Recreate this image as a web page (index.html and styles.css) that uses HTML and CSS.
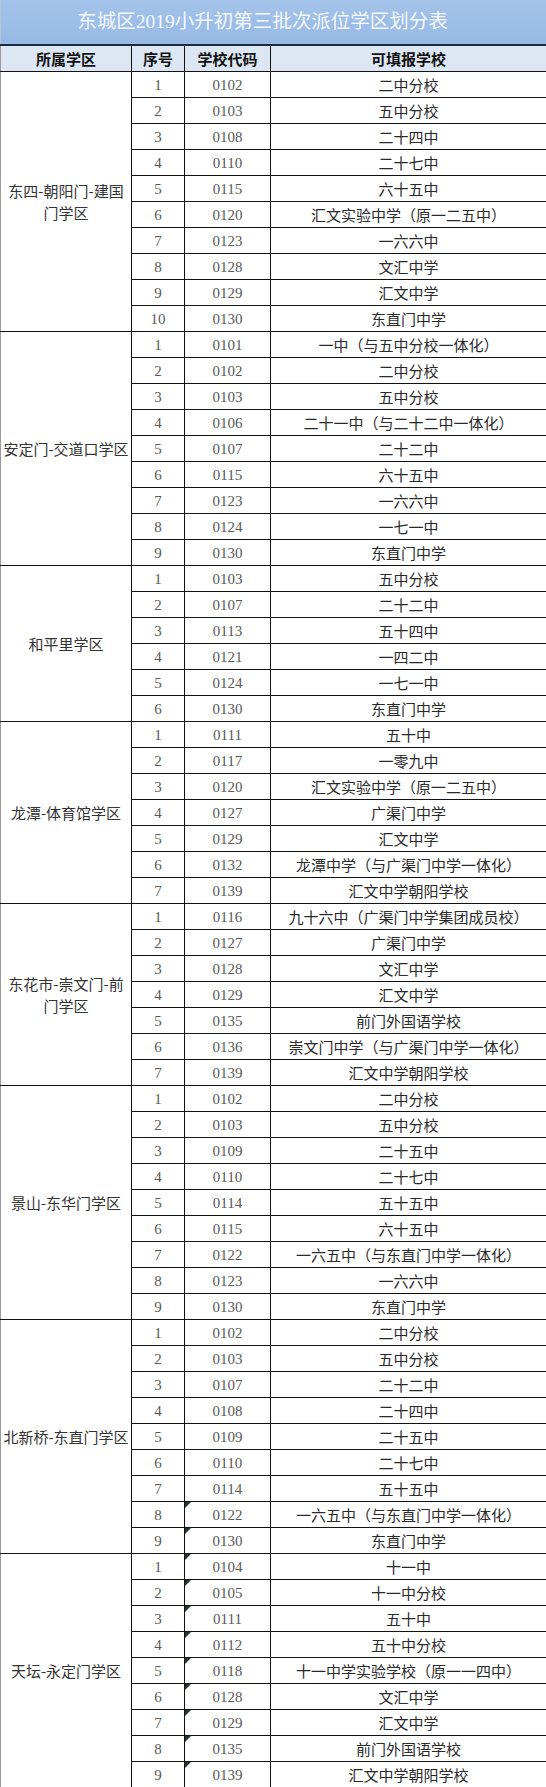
FILE: index.html
```html
<!DOCTYPE html>
<html lang="zh-CN">
<head>
<meta charset="utf-8">
<title>东城区2019小升初第三批次派位学区划分表</title>
<link rel="stylesheet" href="styles.css">
</head>
<body>
<div class="sheet">
  <div class="title">东城区2019小升初第三批次派位学区划分表</div>
  <table class="grid">
    <colgroup>
      <col class="c-area"><col class="c-no"><col class="c-code"><col class="c-school">
    </colgroup>
    <thead>
      <tr><th class="first">所属学区</th><th>序号</th><th>学校代码</th><th>可填报学校</th></tr>
    </thead>
    <tbody>
      <tr><td class="area" rowspan="10">东四-朝阳门-建国<br>门学区</td><td class="num">1</td><td class="num">0102</td><td>二中分校</td></tr>
      <tr><td class="num">2</td><td class="num">0103</td><td>五中分校</td></tr>
      <tr><td class="num">3</td><td class="num">0108</td><td>二十四中</td></tr>
      <tr><td class="num">4</td><td class="num">0110</td><td>二十七中</td></tr>
      <tr><td class="num">5</td><td class="num">0115</td><td>六十五中</td></tr>
      <tr><td class="num">6</td><td class="num">0120</td><td>汇文实验中学（原一二五中）</td></tr>
      <tr><td class="num">7</td><td class="num">0123</td><td>一六六中</td></tr>
      <tr><td class="num">8</td><td class="num">0128</td><td>文汇中学</td></tr>
      <tr><td class="num">9</td><td class="num">0129</td><td>汇文中学</td></tr>
      <tr><td class="num">10</td><td class="num">0130</td><td>东直门中学</td></tr>

      <tr><td class="area" rowspan="9">安定门-交道口学区</td><td class="num">1</td><td class="num">0101</td><td>一中（与五中分校一体化）</td></tr>
      <tr><td class="num">2</td><td class="num">0102</td><td>二中分校</td></tr>
      <tr><td class="num">3</td><td class="num">0103</td><td>五中分校</td></tr>
      <tr><td class="num">4</td><td class="num">0106</td><td>二十一中（与二十二中一体化）</td></tr>
      <tr><td class="num">5</td><td class="num">0107</td><td>二十二中</td></tr>
      <tr><td class="num">6</td><td class="num">0115</td><td>六十五中</td></tr>
      <tr><td class="num">7</td><td class="num">0123</td><td>一六六中</td></tr>
      <tr><td class="num">8</td><td class="num">0124</td><td>一七一中</td></tr>
      <tr><td class="num">9</td><td class="num">0130</td><td>东直门中学</td></tr>

      <tr><td class="area" rowspan="6">和平里学区</td><td class="num">1</td><td class="num">0103</td><td>五中分校</td></tr>
      <tr><td class="num">2</td><td class="num">0107</td><td>二十二中</td></tr>
      <tr><td class="num">3</td><td class="num">0113</td><td>五十四中</td></tr>
      <tr><td class="num">4</td><td class="num">0121</td><td>一四二中</td></tr>
      <tr><td class="num">5</td><td class="num">0124</td><td>一七一中</td></tr>
      <tr><td class="num">6</td><td class="num">0130</td><td>东直门中学</td></tr>

      <tr><td class="area" rowspan="7">龙潭-体育馆学区</td><td class="num">1</td><td class="num">0111</td><td>五十中</td></tr>
      <tr><td class="num">2</td><td class="num">0117</td><td>一零九中</td></tr>
      <tr><td class="num">3</td><td class="num">0120</td><td>汇文实验中学（原一二五中）</td></tr>
      <tr><td class="num">4</td><td class="num">0127</td><td>广渠门中学</td></tr>
      <tr><td class="num">5</td><td class="num">0129</td><td>汇文中学</td></tr>
      <tr><td class="num">6</td><td class="num">0132</td><td>龙潭中学（与广渠门中学一体化）</td></tr>
      <tr><td class="num">7</td><td class="num">0139</td><td>汇文中学朝阳学校</td></tr>

      <tr><td class="area" rowspan="7">东花市-崇文门-前<br>门学区</td><td class="num">1</td><td class="num">0116</td><td>九十六中（广渠门中学集团成员校）</td></tr>
      <tr><td class="num">2</td><td class="num">0127</td><td>广渠门中学</td></tr>
      <tr><td class="num">3</td><td class="num">0128</td><td>文汇中学</td></tr>
      <tr><td class="num">4</td><td class="num">0129</td><td>汇文中学</td></tr>
      <tr><td class="num">5</td><td class="num">0135</td><td>前门外国语学校</td></tr>
      <tr><td class="num">6</td><td class="num">0136</td><td>崇文门中学（与广渠门中学一体化）</td></tr>
      <tr><td class="num">7</td><td class="num">0139</td><td>汇文中学朝阳学校</td></tr>

      <tr><td class="area" rowspan="9">景山-东华门学区</td><td class="num">1</td><td class="num">0102</td><td>二中分校</td></tr>
      <tr><td class="num">2</td><td class="num">0103</td><td>五中分校</td></tr>
      <tr><td class="num">3</td><td class="num">0109</td><td>二十五中</td></tr>
      <tr><td class="num">4</td><td class="num">0110</td><td>二十七中</td></tr>
      <tr><td class="num">5</td><td class="num">0114</td><td>五十五中</td></tr>
      <tr><td class="num">6</td><td class="num">0115</td><td>六十五中</td></tr>
      <tr><td class="num">7</td><td class="num">0122</td><td>一六五中（与东直门中学一体化）</td></tr>
      <tr><td class="num">8</td><td class="num">0123</td><td>一六六中</td></tr>
      <tr><td class="num">9</td><td class="num">0130</td><td>东直门中学</td></tr>

      <tr><td class="area" rowspan="9">北新桥-东直门学区</td><td class="num">1</td><td class="num">0102</td><td>二中分校</td></tr>
      <tr><td class="num">2</td><td class="num">0103</td><td>五中分校</td></tr>
      <tr><td class="num">3</td><td class="num">0107</td><td>二十二中</td></tr>
      <tr><td class="num">4</td><td class="num">0108</td><td>二十四中</td></tr>
      <tr><td class="num">5</td><td class="num">0109</td><td>二十五中</td></tr>
      <tr><td class="num">6</td><td class="num">0110</td><td>二十七中</td></tr>
      <tr><td class="num">7</td><td class="num">0114</td><td>五十五中</td></tr>
      <tr><td class="num">8</td><td class="num flag">0122</td><td>一六五中（与东直门中学一体化）</td></tr>
      <tr><td class="num">9</td><td class="num flag">0130</td><td>东直门中学</td></tr>

      <tr><td class="area" rowspan="9">天坛-永定门学区</td><td class="num">1</td><td class="num flag">0104</td><td>十一中</td></tr>
      <tr><td class="num">2</td><td class="num flag">0105</td><td>十一中分校</td></tr>
      <tr><td class="num">3</td><td class="num flag">0111</td><td>五十中</td></tr>
      <tr><td class="num">4</td><td class="num flag">0112</td><td>五十中分校</td></tr>
      <tr><td class="num">5</td><td class="num flag">0118</td><td>十一中学实验学校（原一一四中）</td></tr>
      <tr><td class="num">6</td><td class="num flag">0128</td><td>文汇中学</td></tr>
      <tr><td class="num">7</td><td class="num flag">0129</td><td>汇文中学</td></tr>
      <tr><td class="num">8</td><td class="num flag">0135</td><td>前门外国语学校</td></tr>
      <tr><td class="num">9</td><td class="num flag">0139</td><td>汇文中学朝阳学校</td></tr>
    </tbody>
  </table>
</div>
</body>
</html>
```
FILE: styles.css
```css
html, body {
  margin: 0;
  padding: 0;
  background: #ffffff;
}

.sheet {
  width: 546px;
  font-family: "Noto Sans CJK SC", "Noto Sans", sans-serif;
}

.title {
  height: 44px;
  box-sizing: border-box;
  border-left: 1px solid #b9c4d2;
  background: linear-gradient(#a4c3ea, #96b9e4);
  color: #f4f8fd;
  font-family: "Liberation Serif", "Noto Sans CJK SC", serif;
  font-size: 19.5px;
  line-height: 44px;
  text-align: center;
  padding-right: 22px;
}

.grid {
  width: 546px;
  table-layout: fixed;
  border-collapse: collapse;
}

.c-area { width: 131px; }
.c-no { width: 53px; }
.c-code { width: 86px; }
.c-school { width: 276px; }

.grid th,
.grid td {
  border: 1px solid #111111;
  padding: 0;
  height: 25px;
  text-align: center;
  vertical-align: middle;
  font-size: 15px;
  line-height: 18px;
  color: #2a2a2a;
  font-weight: 400;
  white-space: nowrap;
}

.grid th {
  background: #dde7f4;
  font-weight: 700;
  color: #111111;
  border-top: 2px solid #1c2a44;
}

.grid th.first,
.grid td.area {
  border-left: 1px solid #9a9a9a;
}

.grid td.area {
  color: #333333;
  white-space: normal;
  line-height: 22px;
}

.grid td.num {
  font-family: "Liberation Serif", serif;
  color: #5a5a5a;
}

.grid td.flag {
  position: relative;
}

.grid td.flag::before {
  content: "";
  position: absolute;
  left: 0;
  top: 0;
  width: 0;
  height: 0;
  border-top: 6px solid #1f3a26;
  border-right: 6px solid transparent;
}
```
